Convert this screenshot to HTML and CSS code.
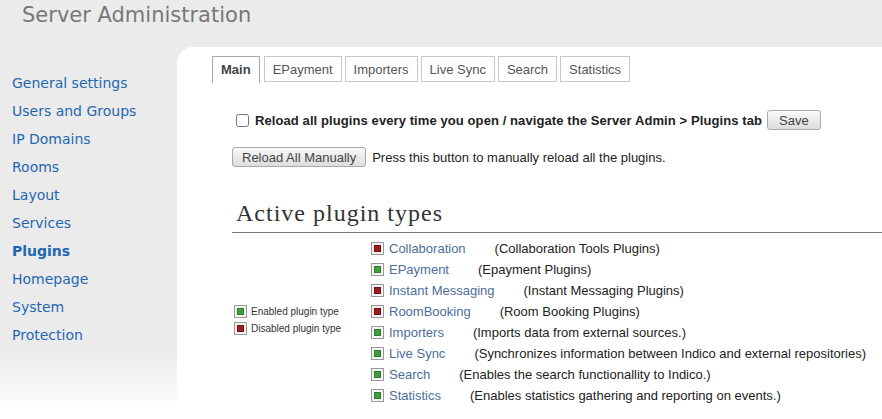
FILE: index.html
```html
<!DOCTYPE html>
<html lang="en">
  <head>
    <meta charset="UTF-8">
    <title>Server Administration</title>
    <link rel="stylesheet" href="styles.css">
  </head>
  <body>

    <div class="header">
      <h1 class="title">Server Administration</h1>
    </div>

    <div class="layout">
      <ul class="side-menu">
        <li><a href="#">General settings</a></li>
        <li><a href="#">Users and Groups</a></li>
        <li><a href="#">IP Domains</a></li>
        <li><a href="#">Rooms</a></li>
        <li><a href="#">Layout</a></li>
        <li><a href="#">Services</a></li>
        <li><a href="#" class="selected">Plugins</a></li>
        <li><a href="#">Homepage</a></li>
        <li><a href="#">System</a></li>
        <li><a href="#">Protection</a></li>
      </ul>

      <div class="panel">
        <ul class="tabs">
          <li class="tab active">Main</li>
          <li class="tab">EPayment</li>
          <li class="tab">Importers</li>
          <li class="tab">Live Sync</li>
          <li class="tab">Search</li>
          <li class="tab">Statistics</li>
        </ul>

        <div class="tab-body">
          <div class="reload-option">
            <input type="checkbox" id="reloadAll">
            <label for="reloadAll">Reload all plugins every time you open / navigate the Server Admin &gt; Plugins tab</label>
            <button class="btn btn-save">Save</button>
          </div>

          <div class="reload-manual">
            <button class="btn">Reload All Manually</button>
            <span>Press this button to manually reload all the plugins.</span>
          </div>

          <h2 class="section-title">Active plugin types</h2>

          <table class="plugin-types">
            <tr>
              <td class="legend">
                <div class="legend-item"><span class="status on"></span>Enabled plugin type</div>
                <div class="legend-item"><span class="status off"></span>Disabled plugin type</div>
              </td>
              <td class="plugin-list">
                <div class="plugin"><span class="status off"></span><a href="#">Collaboration</a><span class="desc">(Collaboration Tools Plugins)</span></div>
                <div class="plugin"><span class="status on"></span><a href="#">EPayment</a><span class="desc">(Epayment Plugins)</span></div>
                <div class="plugin"><span class="status off"></span><a href="#">Instant Messaging</a><span class="desc">(Instant Messaging Plugins)</span></div>
                <div class="plugin"><span class="status off"></span><a href="#">RoomBooking</a><span class="desc">(Room Booking Plugins)</span></div>
                <div class="plugin"><span class="status on"></span><a href="#">Importers</a><span class="desc">(Imports data from external sources.)</span></div>
                <div class="plugin"><span class="status on"></span><a href="#">Live Sync</a><span class="desc">(Synchronizes information between Indico and external repositories)</span></div>
                <div class="plugin"><span class="status on"></span><a href="#">Search</a><span class="desc">(Enables the search functionallity to Indico.)</span></div>
                <div class="plugin"><span class="status on"></span><a href="#">Statistics</a><span class="desc">(Enables statistics gathering and reporting on events.)</span></div>
              </td>
            </tr>
          </table>
        </div>
      </div>
    </div>

  </body>
</html>
```

FILE: styles.css
```css
html, body {
  margin: 0;
  padding: 0;
  background-color: white;
  font-family: "Liberation Sans", Arial, sans-serif;
  font-size: 13px;
  color: #222;
}
.header {
  height: 47px;
  background-color: #ebebeb;
  padding-left: 22px;
}
.title {
  margin: 0;
  padding-top: 3px;
  font-family: "DejaVu Sans", Verdana, sans-serif;
  font-size: 21px;
  font-weight: normal;
  line-height: 24px;
  color: #777;
}
.layout {
  display: flex;
  align-items: flex-start;
  background: linear-gradient(#ebebeb 302px, #fafafa 353px, white 354px);
}
.side-menu {
  list-style: none;
  margin: 0;
  padding: 22px 0 0 12px;
  width: 165px;
  flex-shrink: 0;
  font-family: "DejaVu Sans", Verdana, sans-serif;
  font-size: 14px;
  line-height: 28px;
}
.side-menu a {
  color: #1f67b1;
  text-decoration: none;
}
.side-menu a.selected {
  font-weight: bold;
}
.panel {
  flex: 1;
  background-color: white;
  border-top-left-radius: 16px;
  padding: 9px 0 20px 35px;
}
.tabs {
  list-style: none;
  margin: 0;
  padding: 0;
  display: flex;
  align-items: flex-start;
}
.tab {
  height: 24px;
  line-height: 25px;
  padding: 0 8px;
  margin-right: 3px;
  border: 1px solid #c8c8c8;
  color: #555;
  background-color: white;
}
.tab.active {
  font-weight: bold;
  color: #444;
  border-color: #aaa;
  border-bottom: none;
  height: 26px;
  margin-right: 4px;
}
.tab-body {
  padding-left: 20px;
}
.reload-option {
  display: flex;
  align-items: center;
  margin-top: 27px;
  height: 20px;
}
.reload-option input {
  margin: 0 6px 0 4px;
  width: 13px;
  height: 13px;
}
.reload-option label {
  font-weight: bold;
  color: #222;
  letter-spacing: 0.09px;
  margin-right: 5px;
}
.btn {
  height: 20px;
  padding: 0 9px;
  border: 1px solid #aaa;
  border-radius: 3px;
  background: linear-gradient(#f9f9f9, #dddddd);
  font-family: "Liberation Sans", Arial, sans-serif;
  font-size: 13px;
  color: #444;
}
.btn-save {
  padding: 0 11px;
}
.reload-manual {
  display: flex;
  align-items: center;
  gap: 6px;
  margin-top: 17px;
}
.section-title {
  margin: 32px 0 0 0;
  padding: 0 0 5px 4px;
  font-family: "Liberation Serif", "Times New Roman", serif;
  font-size: 24px;
  font-weight: normal;
  letter-spacing: 1px;
  line-height: 28px;
  color: #333;
  border-bottom: 1px solid #777;
}
.plugin-types {
  border-collapse: collapse;
}
.plugin-types td {
  padding: 0;
}
.legend {
  width: 137px;
  padding-left: 2px !important;
  vertical-align: middle;
}
.legend-item {
  display: flex;
  align-items: center;
  height: 17px;
  font-size: 10px;
  color: #333;
}
.legend-item .status {
  margin-right: 4px;
}
.plugin-list {
  padding-top: 5px !important;
  vertical-align: top;
}
.plugin {
  display: flex;
  align-items: center;
  height: 21px;
  white-space: nowrap;
}
.plugin a {
  color: #4b6e9c;
  text-decoration: none;
  margin-left: 5px;
}
.plugin .desc {
  margin-left: 29px;
}
.status {
  display: inline-block;
  width: 9px;
  height: 9px;
  border: 1px solid #999;
  padding: 1px;
  background-clip: content-box;
  flex-shrink: 0;
}
.status.on {
  background-color: #3f9f3f;
  box-shadow: inset 0 0 0 2px #f4f4f4, inset 0 0 0 3px #2e7a2e;
}
.status.off {
  background-color: #a31c1c;
  box-shadow: inset 0 0 0 2px #f4f4f4, inset 0 0 0 3px #701010;
}
```
